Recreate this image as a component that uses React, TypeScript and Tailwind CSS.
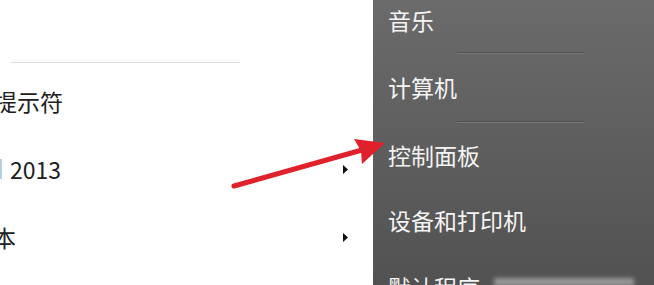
import React from 'react';

const font = { fontFamily: '"Noto Sans CJK SC", "Noto Sans", sans-serif' };

const SubArrow: React.FC = () => (
  <svg width="5" height="9" viewBox="0 0 5 9" className="shrink-0">
    <path d="M0 0 L5 4.5 L0 9 Z" fill="#111" />
  </svg>
);

const DarkSeparator: React.FC = () => (
  <div className="ml-[69px] w-[127px]">
    <div className="h-px bg-[#4e4e4e]" />
    <div className="h-px bg-[#7a797a]" />
  </div>
);

export default function App() {
  return (
    <div className="relative flex w-[654px] h-[285px] overflow-hidden bg-white" style={font}>
      {/* left: program list */}
      <div className="w-[373px] shrink-0 bg-white text-[23px] text-[#202020]">
        <div className="mt-[62px] ml-[10px] w-[230px] h-px bg-[#dedede]" />
        <div className="h-[4px]" />
        <div className="h-[68px] flex items-center">
          <span className="ml-[-6px] leading-none">提示符</span>
        </div>
        <div className="h-[68px] flex items-center justify-between pr-[25px]">
          <div className="flex items-center">
            <span className="w-[2px] h-[20px] bg-[#b7cfdc]" />
            <span className="ml-[8px] leading-none">2013</span>
          </div>
          <SubArrow />
        </div>
        <div className="h-[68px] flex items-center justify-between pr-[25px]">
          <span className="ml-[-7px] leading-none">本</span>
          <SubArrow />
        </div>
      </div>

      {/* right: dark places column */}
      <div className="flex-1 bg-linear-to-b from-[#6c6b6c] to-[#525252] text-[23px] text-[#f4f4f4] pl-[15px]">
        <div className="h-[41px] flex items-center leading-none">音乐</div>
        <div className="h-[11px]" />
        <DarkSeparator />
        <div className="h-[67px] flex items-center leading-none">计算机</div>
        <DarkSeparator />
        <div className="h-[64px] flex items-center leading-none">控制面板</div>
        <div className="h-[66px] flex items-center leading-none">设备和打印机</div>
        <div className="h-[68px] flex items-center gap-[14px] leading-none">
          <span>默认程序</span>
          <span className="w-[140px] h-[8px] bg-white/40 blur-[2px] mt-[-10px]" />
        </div>
      </div>

      {/* red annotation arrow */}
      <svg className="absolute inset-0 pointer-events-none" width="654" height="285" viewBox="0 0 654 285">
        <line x1="234" y1="186" x2="362" y2="150" stroke="#e0202a" strokeWidth="5" strokeLinecap="round" />
        <path d="M385 143 L354 139 L361 151 L362 164 Z" fill="#e0202a" />
      </svg>
    </div>
  );
}
